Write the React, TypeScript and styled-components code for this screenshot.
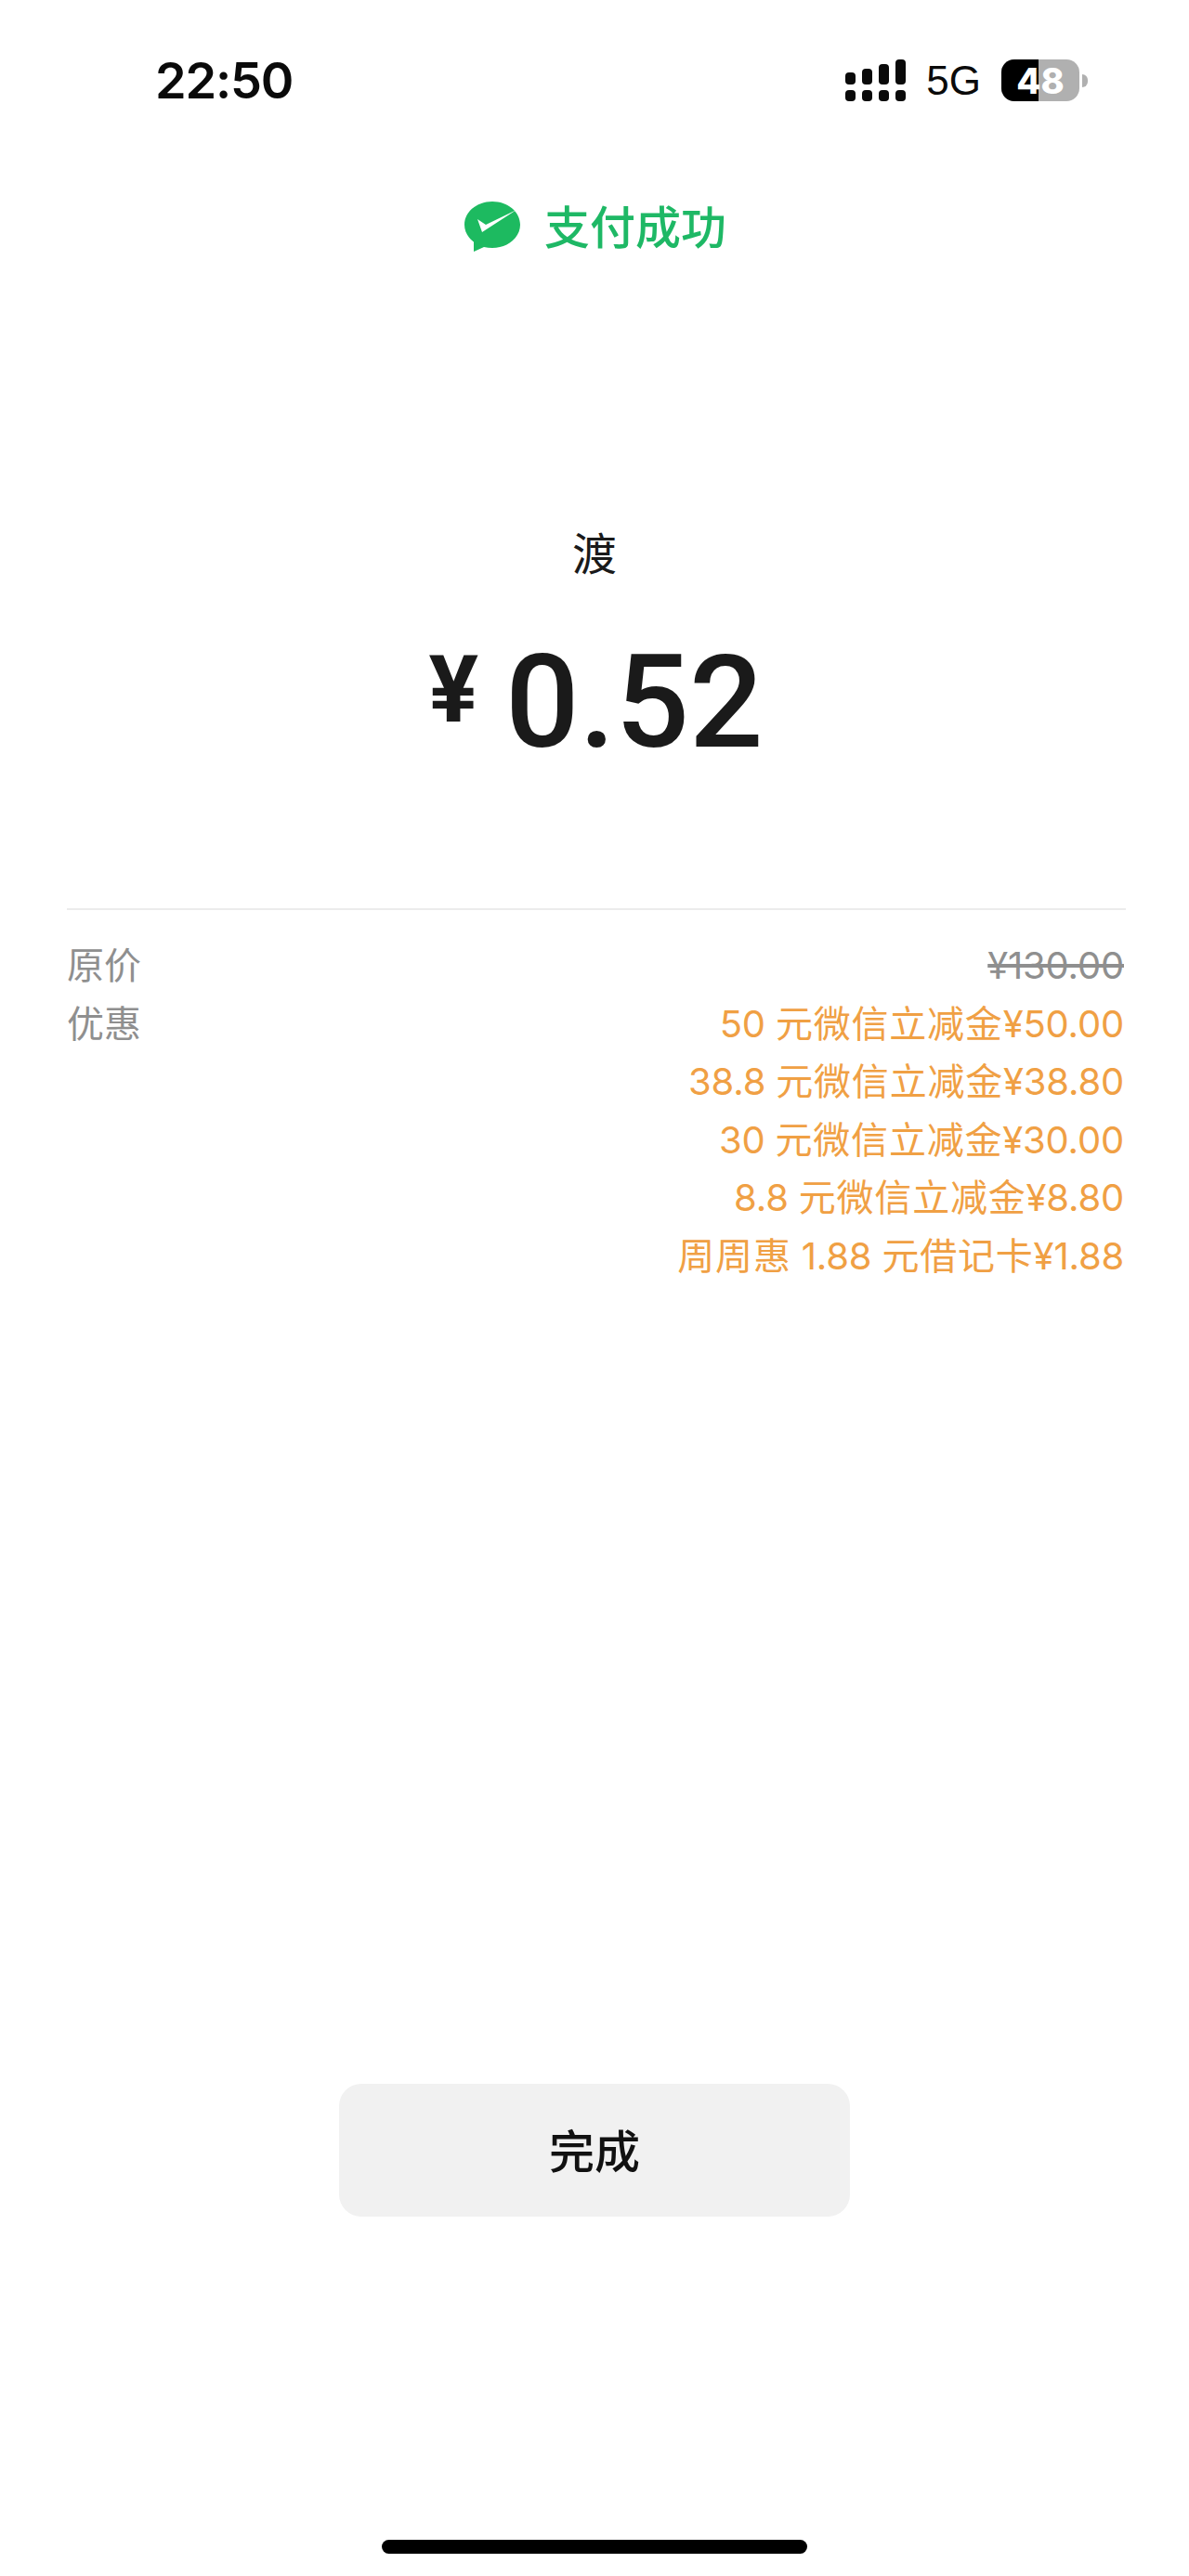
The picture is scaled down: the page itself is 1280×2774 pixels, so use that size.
import React from "react";
import styled, { createGlobalStyle } from "styled-components";

const GlobalStyle = createGlobalStyle`
  html, body {
    margin: 0;
    padding: 0;
    background: #fff;
  }
`;

const cjk = `Roboto, "Noto Sans CJK SC", sans-serif`;

const Page = styled.div`
  width: 1280px;
  height: 2774px;
  display: flex;
  flex-direction: column;
  font-family: ${cjk};
  color: #1a1a1a;
  overflow: hidden;
`;

const StatusBar = styled.div`
  display: flex;
  align-items: center;
  justify-content: space-between;
  height: 45px;
  padding: 64px 109px 0 167px;
`;

const Time = styled.div`
  font-family: Inter, sans-serif;
  font-size: 54px;
  font-weight: 600;
  line-height: 45px;
  color: #0a0a0a;
  letter-spacing: -1.2px;
`;

const StatusRight = styled.div`
  display: flex;
  align-items: center;
`;

const Signal = styled.div`
  display: flex;
  align-items: flex-end;
  gap: 7px;
  height: 45px;
  margin-right: 22px;
`;

const SignalCol = styled.div`
  display: flex;
  flex-direction: column;
  gap: 6px;
  width: 11px;
`;

const SignalBar = styled.div<{ $h: number }>`
  width: 11px;
  height: ${(p) => p.$h}px;
  border-radius: 4px;
  background: #0a0a0a;
`;

const NetLabel = styled.div`
  font-family: "Liberation Sans", sans-serif;
  font-size: 44px;
  line-height: 45px;
  color: #0a0a0a;
  margin-right: 22px;
`;

const Battery = styled.div`
  position: relative;
  display: flex;
  width: 84px;
  height: 45px;
  border-radius: 14px;
  overflow: hidden;
  background: #b0b0b0;
`;

const BatteryLevel = styled.div`
  width: 40px;
  background: #000;
`;

const BatteryText = styled.div`
  position: absolute;
  inset: 0;
  display: flex;
  align-items: center;
  justify-content: center;
  font-family: Inter, sans-serif;
  font-size: 38px;
  font-weight: 800;
  color: #fff;
`;

const BatteryCap = styled.div`
  width: 6px;
  height: 14px;
  margin-left: 3px;
  border-radius: 0 7px 7px 0;
  background: #b0b0b0;
`;

const Brand = styled.div`
  display: flex;
  align-items: flex-start;
  justify-content: center;
  gap: 26px;
  margin-top: 108px;
  height: 54px;
  padding-left: 2px;
`;

const BrandText = styled.div`
  font-size: 49px;
  font-weight: 500;
  line-height: 54px;
  margin-top: 3px;
  color: #1eb865;
`;

const Payee = styled.div`
  margin-top: 300px;
  text-align: center;
  font-size: 48px;
  font-weight: 400;
  line-height: 54px;
  color: #1a1a1a;
`;

const AmountRow = styled.div`
  display: flex;
  align-items: flex-start;
  justify-content: center;
  gap: 29px;
  margin-top: 66px;
  height: 130px;
  padding-left: 3px;
`;

const Currency = styled.div`
  font-size: 100px;
  font-weight: 700;
  line-height: 100px;
  margin-top: 2px;
`;

const AmountValue = styled.div`
  font-size: 140px;
  font-weight: 500;
  line-height: 130px;
`;

const Divider = styled.div`
  height: 2px;
  margin: 157px 68px 0 72px;
  background: #ececec;
`;

const Details = styled.div`
  display: grid;
  grid-template-columns: 1fr auto;
  margin: 30px 70px 0 72px;
  font-size: 40px;
  line-height: 62.5px;
  letter-spacing: 0.8px;
`;

const Label = styled.div`
  color: #8f8f8f;
  letter-spacing: 0;
`;

const Original = styled.div`
  color: #8f8f8f;
  text-align: right;
  height: 62.5px;
  text-decoration: line-through;
`;

const Discounts = styled.div`
  color: #f0a044;
  text-align: right;
`;

const DiscountRow = styled.div`
  height: 62.5px;
`;

const Num = styled.span`
  font-family: Inter, sans-serif;
  font-size: 40px;
  line-height: 1;
  letter-spacing: -0.2px;
`;

const Spacer = styled.div`
  flex: 1;
`;

const DoneButton = styled.button`
  display: block;
  width: 550px;
  height: 143px;
  margin: 0 auto;
  padding: 0 0 4px;
  border: 0;
  border-radius: 24px;
  background: #f1f1f1;
  font-family: ${cjk};
  font-size: 49px;
  font-weight: 500;
  color: #111;
`;

const HomeBar = styled.div`
  width: 458px;
  height: 15px;
  margin: 348px auto 24px;
  border-radius: 8px;
  background: #000;
`;

const signal = [13, 17, 22, 27];

const discounts = [
  "50 元微信立减金¥50.00",
  "38.8 元微信立减金¥38.80",
  "30 元微信立减金¥30.00",
  "8.8 元微信立减金¥8.80",
  "周周惠 1.88 元借记卡¥1.88",
];

// digits and the yen sign get a wider latin face than the chinese text
function Mixed({ text }: { text: string }) {
  const parts = text.split(/([¥0-9. ]+)/).filter(Boolean);
  return (
    <>
      {parts.map((part, i) =>
        /^[¥0-9. ]+$/.test(part) ? <Num key={i}>{part}</Num> : <span key={i}>{part}</span>
      )}
    </>
  );
}

function WeChatPayLogo() {
  return (
    <svg width="60" height="54" viewBox="0 0 60 54">
      <path
        d="M30 0C13.400 0 0 11.200 0 25c0 7.400 3.900 14 10 18.600L10 54 21 49c2.800.7 5.900 1 9 1 16.600 0 30-11.200 30-25S46.600 0 30 0Z"
        fill="#1dba60"
      />
      <path d="M14 19 23 25 56 9 19 33Z" fill="#fff" />
    </svg>
  );
}

export default function App() {
  return (
    <Page>
      <GlobalStyle />
      <StatusBar>
        <Time>22:50</Time>
        <StatusRight>
          <Signal>
            {signal.map((h) => (
              <SignalCol key={h}>
                <SignalBar $h={h} />
                <SignalBar $h={12} />
              </SignalCol>
            ))}
          </Signal>
          <NetLabel>5G</NetLabel>
          <Battery>
            <BatteryLevel />
            <BatteryText>48</BatteryText>
          </Battery>
          <BatteryCap />
        </StatusRight>
      </StatusBar>

      <Brand>
        <WeChatPayLogo />
        <BrandText>支付成功</BrandText>
      </Brand>

      <Payee>渡</Payee>

      <AmountRow>
        <Currency>¥</Currency>
        <AmountValue>0.52</AmountValue>
      </AmountRow>

      <Divider />

      <Details>
        <Label>原价</Label>
        <Original>
          <Num>¥130.00</Num>
        </Original>
        <Label>优惠</Label>
        <Discounts>
          {discounts.map((d) => (
            <DiscountRow key={d}>
              <Mixed text={d} />
            </DiscountRow>
          ))}
        </Discounts>
      </Details>

      <Spacer />
      <DoneButton>完成</DoneButton>
      <HomeBar />
    </Page>
  );
}
